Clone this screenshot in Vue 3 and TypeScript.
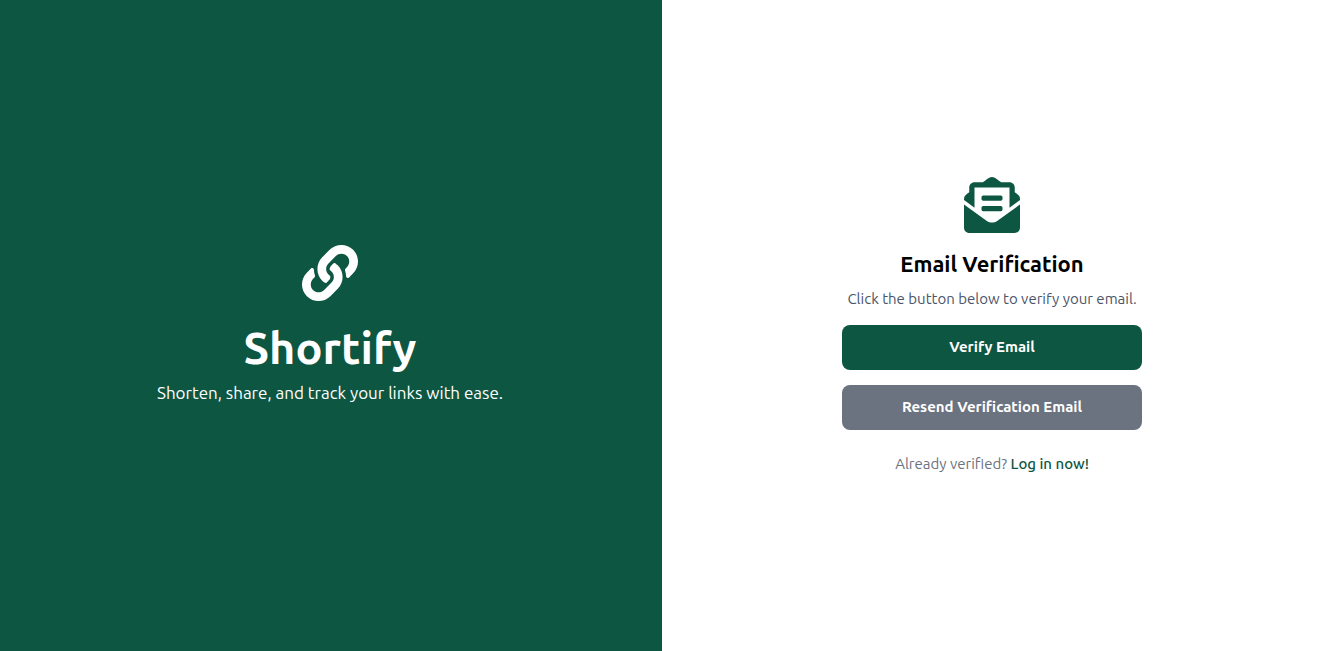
<script setup lang="ts">
const brand = 'Shortify'
const tagline = 'Shorten, share, and track your links with ease.'
</script>

<template>
  <main class="page">
    <section class="brand">
      <svg class="icon" viewBox="0 0 512 512" aria-hidden="true">
        <path d="M326.612 185.391c59.747 59.809 58.927 155.698.36 214.59-.11.12-.24.25-.36.37l-67.2 67.2c-59.27 59.27-155.699 59.262-214.96 0-59.27-59.26-59.27-155.7 0-214.96l37.106-37.106c9.84-9.84 26.786-3.3 27.294 10.606.648 17.722 3.826 35.527 9.69 52.721 1.986 5.822.567 12.262-3.783 16.612l-13.087 13.087c-28.026 28.026-28.905 73.66-1.155 101.96 28.024 28.579 74.086 28.749 102.325.51l67.2-67.19c28.191-28.191 28.073-73.757 0-101.83-3.701-3.694-7.429-6.564-10.341-8.569a16.037 16.037 0 0 1-6.947-12.606c-.396-10.567 3.348-21.456 11.698-29.806l21.054-21.055c5.521-5.521 14.182-6.199 20.584-1.731a152.482 152.482 0 0 1 20.522 17.197zM467.547 44.449c-59.261-59.262-155.69-59.27-214.96 0l-67.2 67.2c-.12.12-.25.25-.36.37-58.566 58.892-59.387 154.781.36 214.59a152.454 152.454 0 0 0 20.521 17.196c6.402 4.468 15.064 3.789 20.584-1.731l21.054-21.055c8.35-8.35 12.094-19.239 11.698-29.806a16.037 16.037 0 0 0-6.947-12.606c-2.912-2.005-6.64-4.875-10.341-8.569-28.073-28.073-28.191-73.639 0-101.83l67.2-67.19c28.239-28.239 74.3-28.069 102.325.51 27.75 28.3 26.872 73.934-1.155 101.96l-13.087 13.087c-4.35 4.35-5.769 10.79-3.783 16.612 5.864 17.194 9.042 34.999 9.69 52.721.509 13.906 17.454 20.446 27.294 10.606l37.106-37.106c59.271-59.259 59.271-155.699.001-214.959z" />
      </svg>
      <h1>{{ brand }}</h1>
      <p>{{ tagline }}</p>
    </section>
    <section class="verify">
      <svg class="icon" viewBox="0 0 512 512" aria-hidden="true">
        <path d="M176 216h160c8.84 0 16-7.16 16-16v-16c0-8.84-7.16-16-16-16H176c-8.84 0-16 7.16-16 16v16c0 8.84 7.16 16 16 16zm-16 80c0 8.84 7.16 16 16 16h160c8.84 0 16-7.16 16-16v-16c0-8.84-7.16-16-16-16H176c-8.84 0-16 7.16-16 16v16zm96 121.13c-16.42 0-32.84-5.06-46.86-15.19L0 250.86V464c0 26.51 21.49 48 48 48h416c26.51 0 48-21.49 48-48V250.86L302.86 401.94c-14.02 10.12-30.44 15.19-46.86 15.19zm237.61-254.18c-8.85-6.94-17.24-13.47-29.61-22.81V96c0-26.51-21.49-48-48-48h-77.55c-3.04-2.2-5.87-4.26-9.04-6.56C312.6 29.17 279.2-.35 256 0c-23.2-.35-56.59 29.17-73.41 41.44-3.17 2.3-6 4.36-9.04 6.56H96c-26.51 0-48 21.49-48 48v44.14c-12.37 9.33-20.76 15.87-29.61 22.81A47.995 47.995 0 0 0 0 200.72v10.65l96 69.35V96h320v184.72l96-69.35v-10.65c0-14.74-6.78-28.67-18.39-37.77z" />
      </svg>
      <h2>Email Verification</h2>
      <p class="hint">Click the button below to verify your email.</p>
      <div class="actions">
        <button type="button" class="primary">Verify Email</button>
        <button type="button" class="secondary">Resend Verification Email</button>
      </div>
      <p class="login">Already verified? <a href="#login">Log in now!</a></p>
    </section>
  </main>
</template>

<style>
body {
  margin: 0;
  background: #fff;
}
</style>

<style scoped>
.page {
  display: grid;
  grid-template-columns: 1fr 1fr;
  gap: 2px;
  min-height: 100vh;
  background: #0d5642;
  font-family: Ubuntu, "Noto Sans", "Open Sans", sans-serif;
  font-size: 15px;
  line-height: 22px;
}
.brand,
.verify {
  display: flex;
  flex-direction: column;
  align-items: center;
  justify-content: center;
  text-align: center;
}
.brand {
  color: #fff;
}
.verify {
  background: #fff;
}
.icon {
  width: 56px;
  height: 56px;
  fill: currentColor;
}
.verify .icon {
  color: #0d5642;
}
h1,
h2,
p {
  margin: 0;
}
h1 {
  margin-top: 23px;
  font-size: 45px;
  line-height: 48px;
  font-weight: 600;
}
.brand p {
  margin-top: 8px;
  font-size: 17px;
  line-height: 26px;
}
h2 {
  margin-top: 16px;
  font-size: 22px;
  line-height: 30px;
  font-weight: 600;
}
.hint {
  margin-top: 9px;
  color: #4a5568;
}
.actions {
  display: flex;
  flex-direction: column;
  gap: 15px;
  width: 300px;
  margin-top: 15px;
}
button {
  height: 45px;
  padding: 0 16px;
  border: 0;
  border-radius: 8px;
  color: #fff;
  font: inherit;
  font-weight: 600;
  cursor: pointer;
}
.primary {
  background: #0d5642;
}
.secondary {
  background: #6b7280;
}
.login {
  margin-top: 23px;
  color: #6b7280;
}
a {
  color: #0d5642;
  font-weight: 500;
  text-decoration: none;
}
</style>
